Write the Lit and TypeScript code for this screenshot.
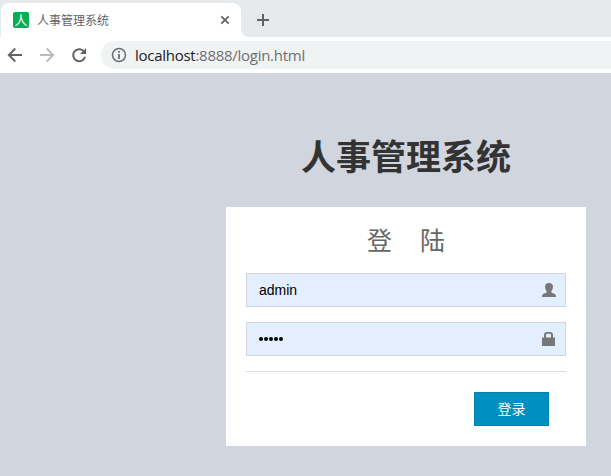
import { LitElement, html, css, svg } from "lit";
import { customElement, property } from "lit/decorators.js";

const icons = {
  back: svg`<path d="M15 8H2M8.300 1.500L1.800 8L8.300 14.500" fill="none" stroke="currentColor" stroke-width="1.900"/>`,
  forward: svg`<path d="M1 8H14M7.700 1.500L14.200 8L7.700 14.500" fill="none" stroke="currentColor" stroke-width="1.900"/>`,
  reload: svg`<path d="M14 9.700A6 6 0 1 1 12.400 3.900L13.600 5.200" fill="none" stroke="currentColor" stroke-width="2"/><path d="M15 1V7H9Z" fill="currentColor"/>`,
  info: svg`<circle cx="8" cy="8" r="6.500" fill="none" stroke="currentColor" stroke-width="1.500"/><path d="M7.100 7H8.900V12H7.100ZM7.100 4H8.900V5.800H7.100Z" fill="currentColor"/>`,
  close: svg`<path d="M4.300 4.300L11.700 11.700M11.700 4.300L4.300 11.700" fill="none" stroke="currentColor" stroke-width="1.700"/>`,
  plus: svg`<path d="M8 2V14M2 8H14" fill="none" stroke="currentColor" stroke-width="2"/>`,
  user: svg`<path d="M8 1C10.600 1 12 2.500 12 4.800C12 6.700 11.300 8.100 10.300 9.200V10.300C11 11.300 14.800 11.500 15 14V15H1V14C1.200 11.500 5 11.300 5.700 10.300V9.200C4.700 8.100 4 6.700 4 4.800C4 2.500 5.400 1 8 1Z" fill="currentColor"/>`,
  lock: svg`<path fill-rule="evenodd" d="M1 6.500H3V4C3 2 4.200 1 6 1H9C10.800 1 12 2 12 4V6.500H14V15H1ZM5 6.500H10V4.300C10 3.300 9.500 2.800 8.600 2.800H6.400C5.500 2.800 5 3.300 5 4.300Z" fill="currentColor"/>`,
};

@customElement("ui-icon")
class UiIcon extends LitElement {
  @property() name: keyof typeof icons = "back";
  static styles = css`
    :host { display: block; width: 16px; height: 16px; flex: none; }
    svg { display: block; }
  `;
  render() {
    return html`<svg width="16" height="16" viewBox="0 0 16 16">${icons[this.name]}</svg>`;
  }
}

@customElement("browser-bar")
class BrowserBar extends LitElement {
  static styles = css`
    :host { display: block; height: 73px; background: #e6eaed; color: #5f6368; }
    .tabs { height: 37px; display: flex; align-items: flex-end; }
    .tab {
      position: relative; box-sizing: border-box; width: 240px; height: 34px; margin-left: 1px;
      padding: 0 8px 0 12px; border-radius: 8px 8px 0 0; background: #fff;
      display: flex; align-items: center;
    }
    .tab::after {
      content: ""; position: absolute; left: 100%; bottom: 0; width: 8px; height: 8px;
      background: radial-gradient(circle at 100% 0, transparent 7.5px, #fff 8.5px);
    }
    .favicon {
      width: 16px; height: 16px; border-radius: 2px; background: #0aad55; color: #fff;
      font: 13px/16px "Noto Sans CJK SC", sans-serif; text-align: center;
    }
    .title { flex: 1; margin-left: 8px; font: 12px/16px "Noto Sans CJK SC", sans-serif; }
    .add { margin: 0 0 9px 14px; }
    .toolbar { height: 36px; background: #fff; display: flex; align-items: center; padding-left: 7px; }
    .nav { display: flex; gap: 16px; }
    .off { color: #b9bbbe; }
    .address {
      flex: 1; height: 28px; margin-left: 14px; padding-left: 10px; box-sizing: border-box;
      border-radius: 14px 0 0 14px; background: #eff3f4; display: flex; align-items: center; gap: 8px;
      font: 15px/20px "Open Sans", "Noto Sans", sans-serif; color: #6d7073;
    }
    .url { letter-spacing: -0.27px; padding-bottom: 1px; }
    .host { color: #202124; }
  `;
  render() {
    return html`
      <div class="tabs">
        <div class="tab">
          <span class="favicon">人</span><span class="title">人事管理系统</span>
          <ui-icon name="close"></ui-icon>
        </div>
        <ui-icon class="add" name="plus"></ui-icon>
      </div>
      <div class="toolbar">
        <div class="nav">
          <ui-icon name="back"></ui-icon>
          <ui-icon class="off" name="forward"></ui-icon>
          <ui-icon name="reload"></ui-icon>
        </div>
        <div class="address">
          <ui-icon name="info"></ui-icon>
          <span class="url"><span class="host">localhost</span>:8888/login.html</span>
        </div>
      </div>
    `;
  }
}

@customElement("login-page")
class LoginPage extends LitElement {
  static styles = css`
    :host {
      flex: 1; box-sizing: border-box; padding: 56px 0 0 226px; background: #d1d5de;
      border-top: 1px solid #d1d5de;
      font-family: "Liberation Sans", "Noto Sans CJK SC", sans-serif;
    }
    .column { width: 360px; }
    h1 {
      margin: 0 0 27px; font: bold 35px/50px "Noto Sans CJK SC", sans-serif;
      text-align: center; color: #333;
    }
    .card { box-sizing: border-box; height: 239px; padding: 19px 20px 20px; background: #fff; }
    .heading {
      height: 26px; margin: 0 0 21px; font: 25px/26px "Noto Sans CJK SC", sans-serif;
      color: #666; display: flex; justify-content: center; gap: 28px;
    }
    .field {
      box-sizing: border-box; height: 34px; margin-bottom: 15px; padding: 0 8px 0 12px;
      border: 1px solid #d1d5de; background: #e3effe;
      display: flex; align-items: center; justify-content: space-between;
      font-size: 14px; color: #000;
    }
    .field ui-icon { color: #777; }
    .dots { display: flex; gap: 1px; }
    .dots i { width: 4px; height: 4px; border-radius: 50%; background: #000; }
    .rule { height: 1px; background: #ddd; }
    .actions { display: flex; justify-content: flex-end; padding: 20px 17px 0 0; }
    button {
      box-sizing: border-box; width: 75px; height: 34px; padding: 0 0 2px; border: 1px solid #0480aa;
      background: #0090bf; color: #fff; font: 14px/20px "Noto Sans CJK SC", sans-serif;
    }
  `;
  render() {
    return html`
      <div class="column">
        <h1>人事管理系统</h1>
        <div class="card">
          <div class="heading"><span>登</span><span>陆</span></div>
          <div class="field"><span>admin</span><ui-icon name="user"></ui-icon></div>
          <div class="field">
            <span class="dots">${[1, 2, 3, 4, 5].map(() => html`<i></i>`)}</span>
            <ui-icon name="lock"></ui-icon>
          </div>
          <div class="rule"></div>
          <div class="actions"><button>登录</button></div>
        </div>
      </div>
    `;
  }
}

@customElement("app-root")
class AppRoot extends LitElement {
  static styles = css`
    :host { display: flex; flex-direction: column; width: 611px; height: 476px; overflow: hidden; }
  `;
  render() {
    return html`<browser-bar></browser-bar><login-page></login-page>`;
  }
}
